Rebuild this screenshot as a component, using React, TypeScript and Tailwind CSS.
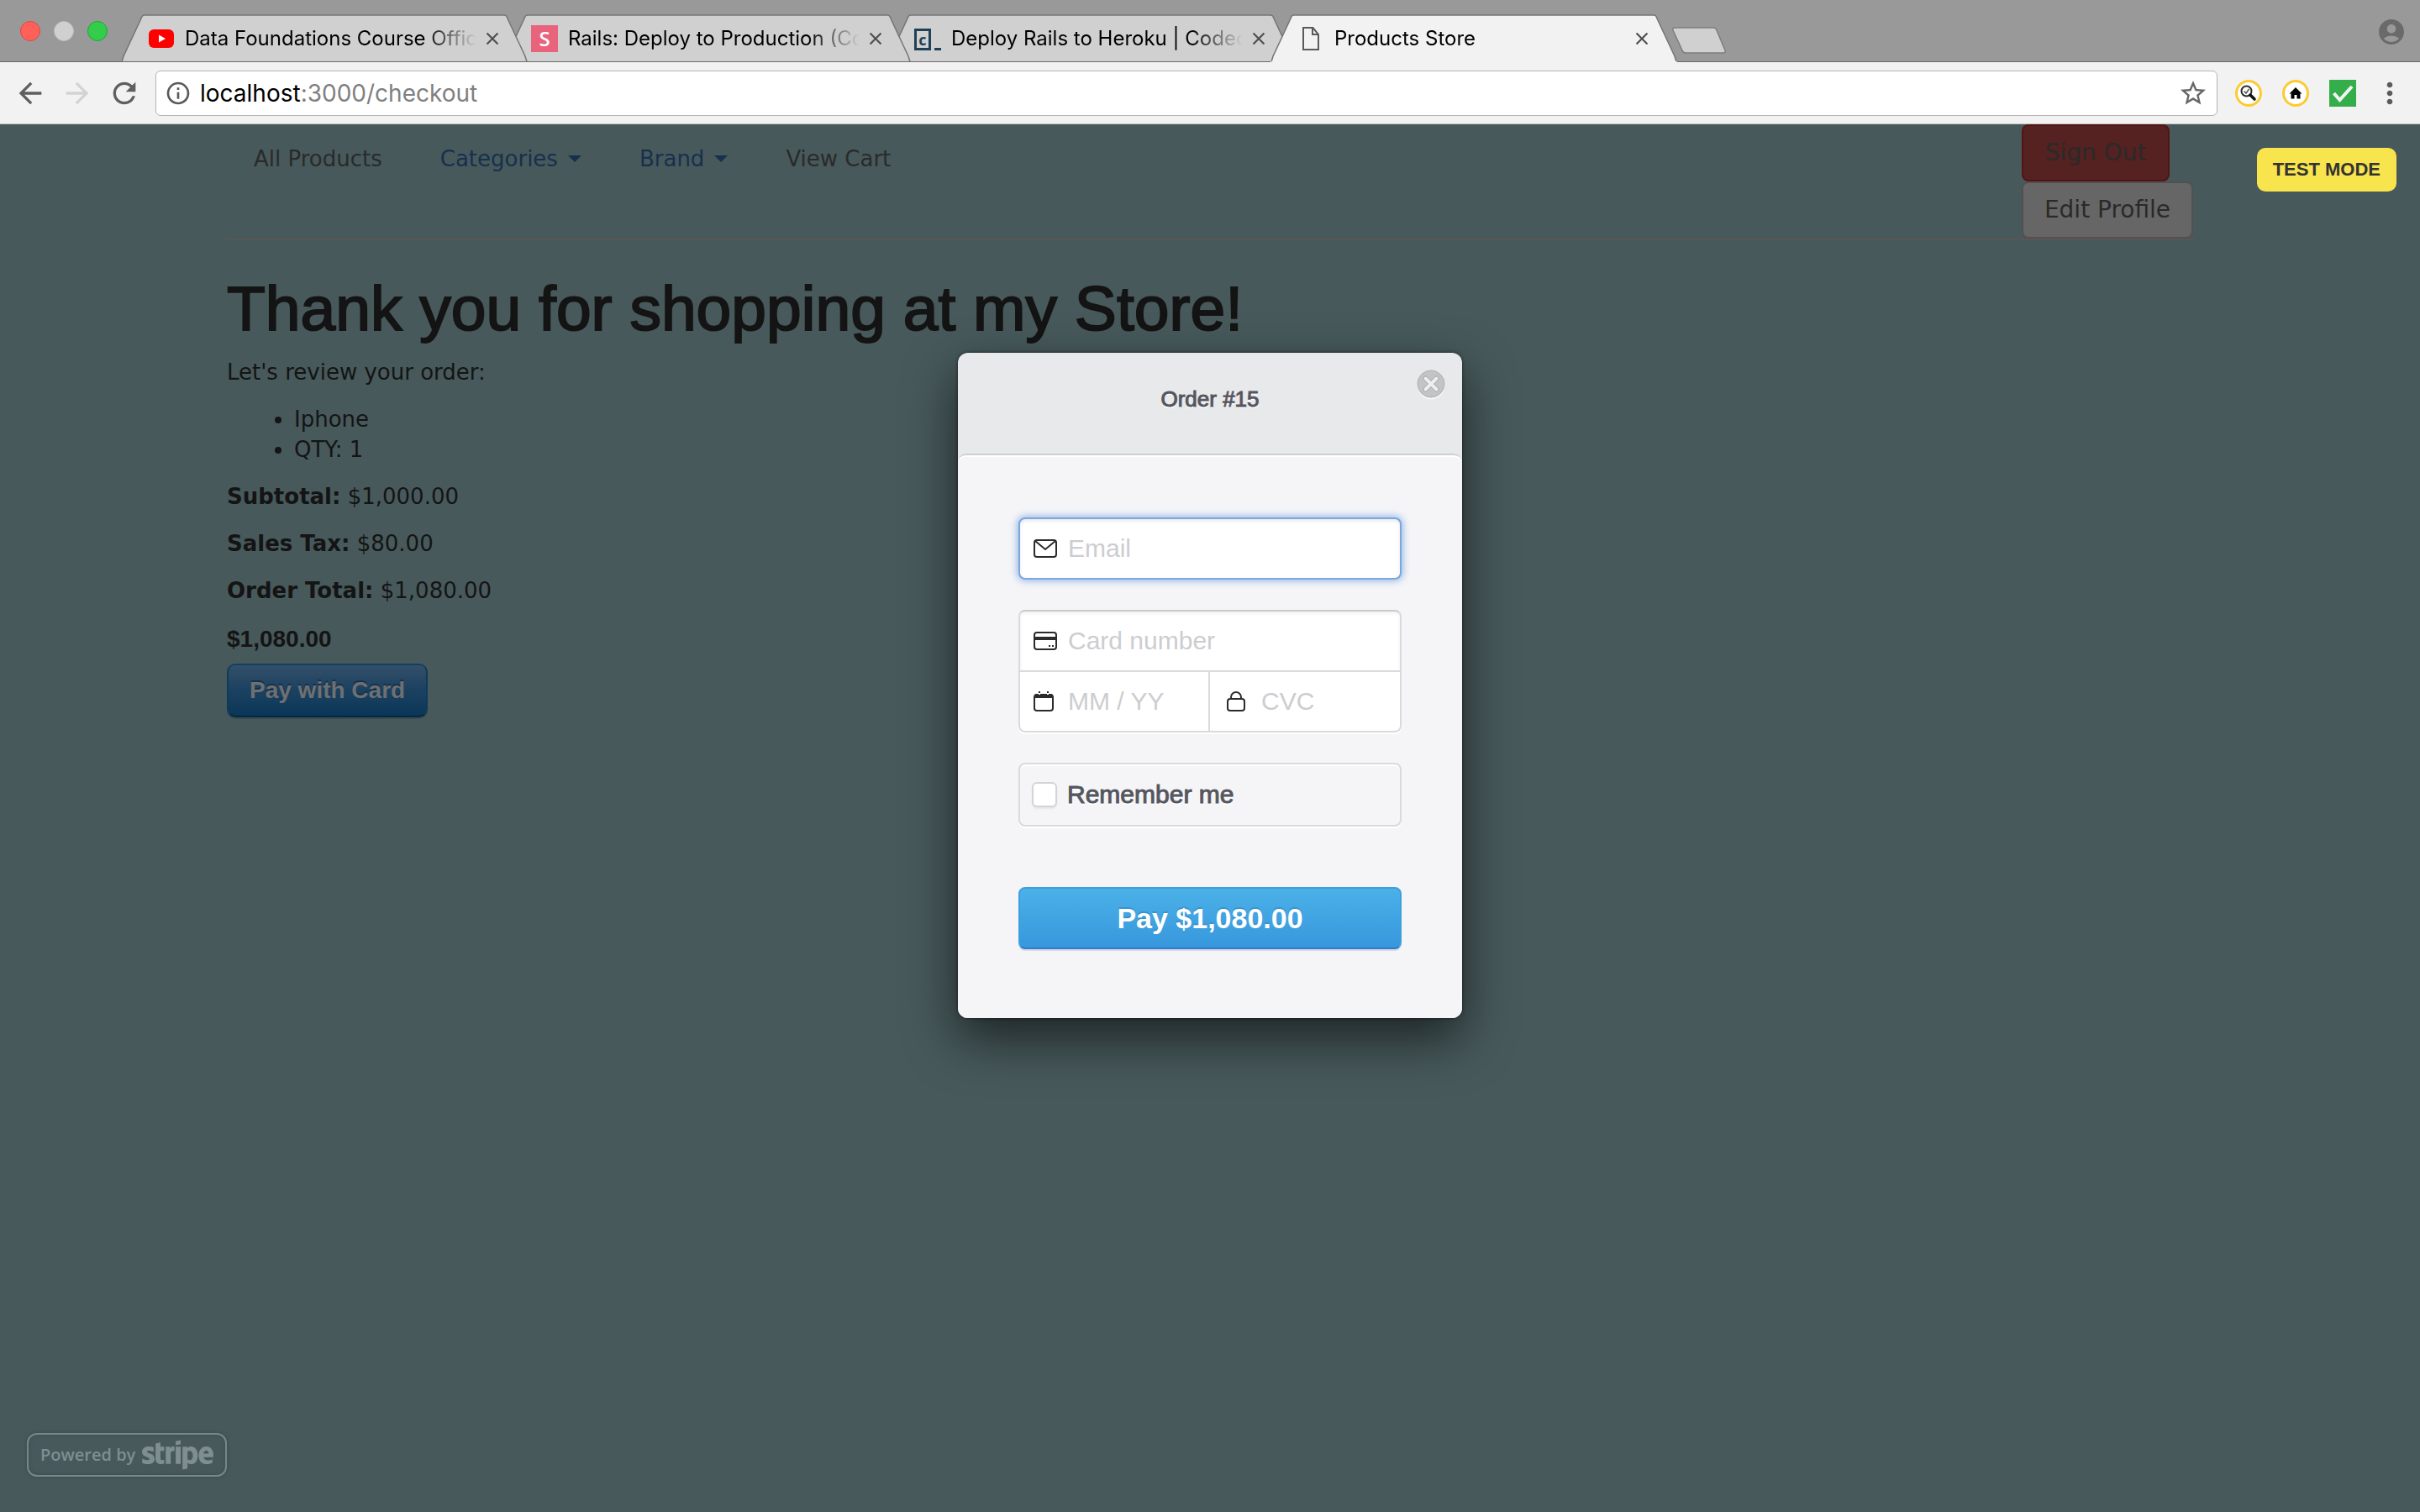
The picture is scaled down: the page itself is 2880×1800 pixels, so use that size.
import type { ReactNode } from "react";
import {
  MdAccountCircle,
  MdArrowBack,
  MdArrowForward,
  MdInfoOutline,
  MdMoreVert,
  MdRefresh,
  MdStarBorder,
} from "react-icons/md";
import { FaStripe } from "react-icons/fa";

/* ---------- Browser chrome ---------- */

function YouTubeIcon() {
  return (
    <svg viewBox="0 0 32 32" className="size-8 shrink-0" aria-hidden="true">
      <rect x="1" y="5" width="30" height="22" rx="6" fill="#ff0000" />
      <path d="M13 11.500v9l8-4.500z" fill="#fff" />
    </svg>
  );
}

function LetterIcon() {
  return (
    <span className="flex size-8 shrink-0 items-center justify-center bg-[#e8637c] font-['Open_Sans',sans-serif] text-2xl leading-8 font-semibold text-white">
      S
    </span>
  );
}

function CodeIcon() {
  return (
    <span className="flex size-8 shrink-0 items-end gap-1 pb-[2px] text-[#204056]" aria-hidden="true">
      <span className="flex h-[26px] w-5 items-center justify-center border-[3px] border-[#204056] font-['Open_Sans',sans-serif] text-lg leading-5 font-bold">
        c
      </span>
      <span className="h-[3px] w-2 bg-[#204056]" />
    </span>
  );
}

function PageIcon() {
  return (
    <svg viewBox="0 0 32 32" className="size-8 shrink-0" fill="none" stroke="#5a5a5a" strokeWidth="2" aria-hidden="true">
      <path d="M7 3h11.500l6.500 8v18H7z" />
      <path d="M18 3v8h7" />
    </svg>
  );
}

function CloseGlyph() {
  return (
    <svg viewBox="0 0 14 14" className="size-[14px]" stroke="#505050" strokeWidth="2.200" aria-hidden="true">
      <path d="M0.500 0.500l13 13M13.500 0.500l-13 13" />
    </svg>
  );
}

function Tab({ icon, title, active, layer }: { icon: ReactNode; title: string; active?: boolean; layer: string }) {
  return (
    <div
      role="tab"
      aria-selected={active ? true : false}
      className={`relative -mr-7 flex h-[57px] w-[484px] items-center gap-3 pr-[35px] pl-8 ${layer}`}
    >
      <svg
        viewBox="0 0 484 57"
        preserveAspectRatio="none"
        className="absolute inset-0 -z-10 h-full w-full"
        aria-hidden="true"
      >
        <path
          d="M0 57Q2 54 3 50L24 5Q25 1 28 1H456Q459 1 460 5L481 50Q482 54 484 57Z"
          fill={active ? "#f2f2f2" : "#d0d0d0"}
        />
        <path
          d="M1 56Q2 54 3 50L24 5Q25 1 28 1H456Q459 1 460 5L481 50Q482 54 483 56"
          fill="none"
          stroke="#757575"
          strokeWidth="1.500"
        />
        {!active && <path d="M0 56.500H484" stroke="#6b6b6b" strokeWidth="1" />}
      </svg>
      {icon}
      <span className="min-w-0 flex-1 overflow-hidden text-2xl whitespace-nowrap text-black [mask-image:linear-gradient(to_right,black_82%,transparent_100%)]">
        {title}
      </span>
      <button type="button" aria-label={`Close ${title}`}>
        <CloseGlyph />
      </button>
    </div>
  );
}

function TabStrip() {
  return (
    <div className="relative flex h-[74px] items-end justify-between border-b border-[#6b6b6b] bg-[#999999]">
      <div className="-mb-px flex items-end">
        <div className="flex h-[74px] w-36 items-center gap-4 pb-px pl-6">
          <span className="size-6 rounded-full border border-[#e2463f] bg-[#ff6059]" />
          <span className="size-6 rounded-full border border-[#bdbdbd] bg-[#d0d0d0]" />
          <span className="size-6 rounded-full border border-[#1ea733] bg-[#33cc4b]" />
        </div>
        <div role="tablist" className="isolate flex">
          <Tab icon={<YouTubeIcon />} title="Data Foundations Course Offic" layer="z-30" />
          <Tab icon={<LetterIcon />} title="Rails: Deploy to Production (Co" layer="z-20" />
          <Tab icon={<CodeIcon />} title="Deploy Rails to Heroku | Codec" layer="z-10" />
          <Tab icon={<PageIcon />} title="Products Store" active layer="z-40" />
        </div>
        <button type="button" aria-label="New tab" className="mb-2 ml-5">
          <svg viewBox="0 0 68 34" className="h-[34px] w-[68px]" aria-hidden="true">
            <path
              d="M5 1H51Q54 1 55 4L65 28Q66 31 63 31H18Q15 31 14 28L3 4Q2 1 5 1Z"
              fill="#d0d0d0"
              stroke="#7d7d7d"
              strokeWidth="1.500"
            />
          </svg>
        </button>
      </div>
      <button type="button" aria-label="Profile" className="mr-4 mb-[17px]">
        <MdAccountCircle className="size-9 text-[#6a6a6a]" />
      </button>
    </div>
  );
}

function ToolBar() {
  return (
    <div className="flex h-[74px] items-center border-b border-[#c4c4c4] bg-[#f2f2f2]">
      <div className="flex w-[185px] items-center gap-4 pl-4 text-[#5f5f5f]">
        <button type="button" aria-label="Back">
          <MdArrowBack className="size-10" />
        </button>
        <button type="button" aria-label="Forward" className="text-[#d3d3d3]">
          <MdArrowForward className="size-10" />
        </button>
        <button type="button" aria-label="Reload">
          <MdRefresh className="size-10" />
        </button>
      </div>
      <div className="relative flex h-[54px] min-w-0 flex-1 items-center gap-[10px] rounded-md border border-[#b5b5b5] bg-white pr-[10px] pl-[10px]">
        <MdInfoOutline className="size-8 shrink-0 text-[#5a5a5a]" />
        <div className="min-w-0 flex-1 text-[28px] whitespace-nowrap text-[#808080]">
          <a href="#checkout">
            <span className="text-black">localhost</span>:3000/checkout
          </a>
        </div>
        <button type="button" aria-label="Bookmark this page">
          <MdStarBorder className="size-9 text-[#666666]" />
        </button>
      </div>
      <div className="flex items-center gap-5 pr-4 pl-[21px]">
        <div className="flex items-center gap-6">
          <button type="button" aria-label="Search extension">
            <svg viewBox="0 0 32 32" className="size-8" fill="none" aria-hidden="true">
              <circle cx="16" cy="16" r="14.500" fill="#fff" stroke="#fccb30" strokeWidth="3" />
              <circle cx="13.500" cy="13.500" r="6" stroke="#2b2b2b" strokeWidth="2" />
              <path d="M18 18l5 5" stroke="#111" strokeWidth="3.500" strokeLinecap="round" />
              <path d="M10.500 13.500l2.500 2.500 3.500-5" stroke="#555" strokeWidth="1.500" />
            </svg>
          </button>
          <button type="button" aria-label="Home extension">
            <svg viewBox="0 0 32 32" className="size-8" fill="none" aria-hidden="true">
              <circle cx="16" cy="16" r="14.500" fill="#fff" stroke="#fccb30" strokeWidth="3" />
              <path d="M16 9l7.500 7.500H21.500V22.500H17.500V18H14.500V22.500H10.500V16.500H8.500z" fill="#000" />
            </svg>
          </button>
          <button type="button" aria-label="Check extension">
            <svg viewBox="0 0 32 32" className="size-8" fill="none" aria-hidden="true">
              <rect width="32" height="32" fill="#34ad4b" />
              <path d="M5.500 16l7 8L27 8" stroke="#f2f2f2" strokeWidth="4" />
            </svg>
          </button>
        </div>
        <button type="button" aria-label="Menu">
          <MdMoreVert className="size-10 text-[#5a5a5a]" />
        </button>
      </div>
    </div>
  );
}

/* ---------- Store page ---------- */

function Caret() {
  return <span className="ml-3 border-x-8 border-t-8 border-x-transparent border-t-[#17304d]" />;
}

function StoreHeader() {
  return (
    <header className="flex items-start justify-between border-b-2 border-[#5b5556]">
      <nav className="flex gap-[69px] pt-[23px] pl-8 leading-9 text-[#2a2a2a]">
        <a href="#products">All Products</a>
        <button type="button" className="flex items-center text-[#17304d]">
          Categories
          <Caret />
        </button>
        <button type="button" className="flex items-center text-[#17304d]">
          Brand
          <Caret />
        </button>
        <a href="#cart">View Cart</a>
      </nav>
      <div className="flex w-[204px] flex-col items-start text-[28px] leading-10 text-[#2a2a2a]">
        <button
          type="button"
          className="h-[68px] w-44 rounded-lg border-2 border-[#511516] bg-[#552121] whitespace-nowrap"
        >
          Sign Out
        </button>
        <button
          type="button"
          className="h-[68px] w-full rounded-lg border-2 border-[#545050] bg-[#666666] whitespace-nowrap"
        >
          Edit Profile
        </button>
      </div>
    </header>
  );
}

function OrderReview() {
  return (
    <section className="leading-9 text-[#141414]">
      <h1 className="mt-[41px] mb-[18px] font-['Liberation_Sans',sans-serif] text-[75px] leading-20 [-webkit-text-stroke:2px_#141414]">
        Thank you for shopping at my Store!
      </h1>
      <p className="mb-5">Let's review your order:</p>
      <ul className="mb-5 list-disc pl-20">
        <li>Iphone</li>
        <li>QTY: 1</li>
      </ul>
      <p className="mb-5">
        <strong className="font-bold">Subtotal:</strong> $1,000.00
      </p>
      <p className="mb-5">
        <strong className="font-bold">Sales Tax:</strong> $80.00
      </p>
      <p className="mb-5">
        <strong className="font-bold">Order Total:</strong> $1,080.00
      </p>
      <p className="font-['Liberation_Sans',sans-serif] text-[28px] leading-10 font-bold">$1,080.00</p>
      <button
        type="button"
        className="mt-[9px] h-16 rounded-[10px] border-2 border-x-[#0f3a5a] border-t-[#14405f] border-b-[#072640] bg-linear-to-b from-[#33506a] via-[#1b4160] to-[#0a3658] px-[25px] font-['Liberation_Sans',sans-serif] text-[28px] leading-10 font-bold text-[#6e7072] shadow-[0_2px_0_#3c4d50] [text-shadow:0_-2px_0_#14304a]"
      >
        Pay with Card
      </button>
    </section>
  );
}

/* ---------- Payment dialog ---------- */

function MailIcon() {
  return (
    <svg viewBox="0 0 28 22" className="h-[22px] w-7" fill="none" stroke="#2b2b2d" strokeWidth="2" aria-hidden="true">
      <rect x="1" y="1" width="26" height="20" rx="3" />
      <path d="M2 2l12 10L26 2" />
    </svg>
  );
}

function CardIcon() {
  return (
    <svg viewBox="0 0 28 22" className="h-[22px] w-7" fill="none" aria-hidden="true">
      <rect x="1" y="1" width="26" height="20" rx="3" stroke="#2b2b2d" strokeWidth="2" />
      <path d="M1 8h26" stroke="#2b2b2d" strokeWidth="4" />
      <path d="M18 17h2M22 17h2" stroke="#2b2b2d" strokeWidth="2" />
    </svg>
  );
}

function CalendarIcon() {
  return (
    <svg viewBox="0 0 24 24" className="size-6" fill="none" aria-hidden="true">
      <rect x="1" y="4" width="22" height="19" rx="3" stroke="#2b2b2d" strokeWidth="2" />
      <path d="M1 8V6Q1 3 4 3H20Q23 3 23 6V8z" fill="#2b2b2d" />
      <path d="M7 0v2M17 0v2" stroke="#2b2b2d" strokeWidth="2" />
      <path d="M7 2v2M17 2v2" stroke="#fff" strokeWidth="2" />
    </svg>
  );
}

function LockIcon() {
  return (
    <svg viewBox="0 0 22 24" className="h-6 w-[22px]" fill="none" stroke="#2b2b2d" strokeWidth="2" aria-hidden="true">
      <rect x="1" y="9" width="20" height="14" rx="3" />
      <path d="M5 9V7a6 6 0 0 1 12 0v2" />
    </svg>
  );
}

function Field({ id, label, icon, className }: { id: string; label: string; icon: ReactNode; className: string }) {
  return (
    <label htmlFor={id} className={`flex min-w-0 items-center ${className}`}>
      <span className="flex w-[41px] shrink-0 items-center">{icon}</span>
      <input
        id={id}
        type="text"
        aria-label={label}
        placeholder={label}
        className="w-full min-w-0 flex-1 bg-transparent text-3xl leading-9 text-[#333333] outline-none placeholder:text-[#cccdd0]"
      />
    </label>
  );
}

function PaymentDialog() {
  return (
    <div
      role="dialog"
      aria-label="Order #15"
      className="relative w-[600px] rounded-xl bg-[#e8e9eb] font-['Liberation_Sans',sans-serif] shadow-[0_24px_60px_rgba(0,0,0,0.6),0_0_4px_rgba(0,0,0,0.5)]"
    >
      <div className="flex h-[120px] items-start justify-center pt-10">
        <h2 className="text-[26px] leading-[30px] text-[#55565f] [-webkit-text-stroke:1px_#55565f] [text-shadow:0_2px_0_#ffffff]">
          Order #15
        </h2>
        <button type="button" aria-label="Close" className="absolute top-5 right-5">
          <svg viewBox="0 0 34 36" className="h-9 w-[34px]" fill="none" aria-hidden="true">
            <circle cx="17" cy="19" r="16.500" fill="#f6f6f7" />
            <circle cx="17" cy="17" r="16" fill="#c3c4c6" stroke="#adaeb0" strokeWidth="1" />
            <path d="M10.500 10.500l13 13M23.500 10.500l-13 13" stroke="#a9aaac" strokeWidth="6" strokeLinecap="round" />
            <path d="M10.500 10.500l13 13M23.500 10.500l-13 13" stroke="#eeeeef" strokeWidth="4" strokeLinecap="round" />
          </svg>
        </button>
      </div>
      <form
        className="rounded-t-[10px] rounded-b-xl border-t-2 border-[#cfd0d2] bg-[#f5f5f7] px-[72px] pt-[74px] pb-[82px] shadow-[inset_0_2px_0_#ffffff]"
        onSubmit={(event) => event.preventDefault()}
      >
        <Field
          id="email"
          label="Email"
          icon={<MailIcon />}
          className="h-[74px] rounded-lg border-2 border-[#7ba7de] bg-white pr-4 pl-4 shadow-[0_0_8px_2px_#9dbbe8,inset_0_2px_4px_#e4e6ea]"
        />
        <div className="mt-9 overflow-hidden rounded-lg border-2 border-[#d9dadc] border-t-[#c9cacc] bg-white shadow-[0_2px_0_#ffffff]">
          <Field
            id="card"
            label="Card number"
            icon={<CardIcon />}
            className="h-[72px] border-b-2 border-[#d9dadc] pr-4 pl-4 shadow-[inset_0_2px_4px_#eeeeef]"
          />
          <div className="grid grid-cols-2">
            <Field
              id="expiry"
              label="MM / YY"
              icon={<CalendarIcon />}
              className="h-[70px] border-r-2 border-[#d9dadc] pr-4 pl-4"
            />
            <Field id="cvc" label="CVC" icon={<LockIcon />} className="h-[70px] pr-4 pl-5" />
          </div>
        </div>
        <label
          htmlFor="remember"
          className="mt-9 flex h-19 items-center gap-3 rounded-lg border-2 border-[#d9dadc] pl-[14px] text-3xl leading-9 text-[#55565f] shadow-[0_2px_0_#ffffff,inset_0_2px_0_#ffffff] [-webkit-text-stroke:1px_#55565f] [text-shadow:0_2px_0_#ffffff]"
        >
          <input
            id="remember"
            type="checkbox"
            className="size-[30px] appearance-none rounded-md border-2 border-[#d3d4d6] bg-white shadow-[0_2px_2px_#e6e6e8]"
          />
          Remember me
        </label>
        <button
          type="submit"
          className="mt-18 block h-[74px] w-full rounded-lg border-2 border-x-[#3d9fdd] border-t-[#3f9fd6] border-b-[#2f7cc0] bg-linear-to-b from-[#4bb1e8] to-[#3797dc] text-[34px] leading-10 font-bold text-white shadow-[0_2px_0_#d6daee] [text-shadow:0_-2px_0_#3a92cc]"
        >
          Pay $1,080.00
        </button>
      </form>
    </div>
  );
}

export default function App() {
  return (
    <div className="flex min-h-screen flex-col bg-[#47595b] font-['Inter',sans-serif]">
      <TabStrip />
      <ToolBar />
      <main className="relative flex-1 font-['DejaVu_Sans',sans-serif] text-[26px]">
        <div className="mx-auto w-[81.25%]">
          <StoreHeader />
          <OrderReview />
        </div>
        <div className="absolute inset-0 flex items-start justify-center pt-[272px]">
          <PaymentDialog />
          <span className="absolute top-7 right-7 rounded-[10px] bg-[#f8e44c] px-[19px] py-[11px] font-['Liberation_Sans',sans-serif] text-[22px] leading-[30px] font-bold text-[#333333]">
            TEST MODE
          </span>
          <a
            href="#stripe"
            className="absolute bottom-[42px] left-8 flex h-[52px] items-center gap-2 rounded-xl border-2 border-[#76878a] px-[14px] font-['Open_Sans',sans-serif] text-xl leading-7 font-semibold text-[#7f8e91] shadow-[0_0_4px_#3c4b4a,inset_0_0_4px_#3c4b4a]"
          >
            Powered by
            <FaStripe className="h-[68px] w-[85px]" aria-label="stripe" />
          </a>
        </div>
      </main>
    </div>
  );
}
